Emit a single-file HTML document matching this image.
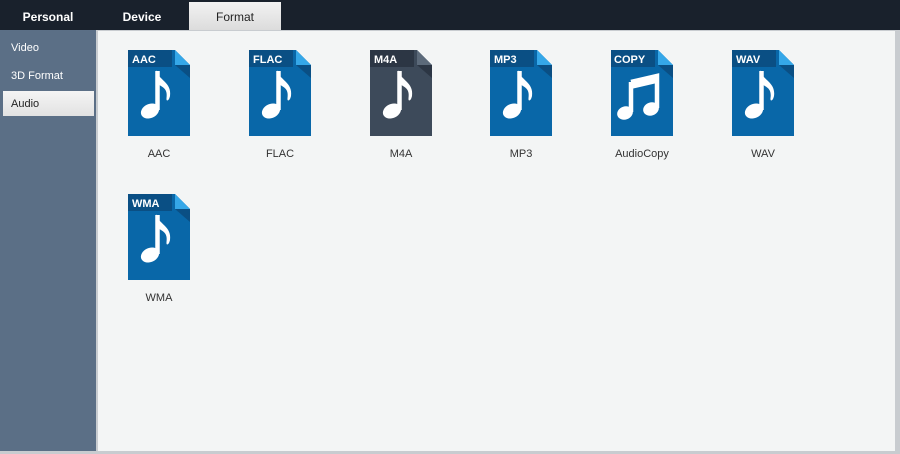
<!DOCTYPE html>
<html><head><meta charset="utf-8"><style>
body{margin:0;width:900px;height:454px;overflow:hidden;font-family:"Liberation Sans",Arial,sans-serif;background:#c8ccd0;position:relative}
#hdr{position:absolute;left:0;top:0;width:900px;height:30px;background:#19212c}
.tab{position:absolute;top:0;height:30px;line-height:35px;font-size:12px;font-weight:bold;color:#fff;text-align:center}
#fmt{left:189px;top:2px;width:92px;height:28px;line-height:31px;background:linear-gradient(#f2f2f2,#dcdcdc);color:#222;font-weight:normal}
#side{position:absolute;left:0;top:30px;width:96px;height:421px;background:#5b6f86}
.si{position:absolute;left:11px;font-size:11px;color:#fff}
#aud{position:absolute;left:3px;top:91px;width:91px;height:25px;background:linear-gradient(#f4f4f4,#e2e2e2)}
#main{position:absolute;left:98px;top:31px;width:797px;height:420px;background:#f3f5f5}
.ic{position:absolute;width:62px;height:86px}
.lb{position:absolute;width:100px;text-align:center;font-size:11px;color:#333}
</style></head><body>
<div id="hdr"></div>
<div class="tab" style="left:0;width:96px">Personal</div>
<div class="tab" style="left:96px;width:92px">Device</div>
<div class="tab" id="fmt">Format</div>
<div id="side"></div>
<div id="aud"></div>
<div class="si" style="top:42px">Video</div>
<div class="si" style="top:70px">3D Format</div>
<div class="si" style="top:98px;color:#222">Audio</div>
<div id="main"></div>
<svg width="0" height="0" style="position:absolute">
<defs>
<g id="note"><path d="M29.5 21 V60" stroke="#fff" stroke-width="4.5"/><ellipse cx="22" cy="61" rx="9.5" ry="7" fill="#fff" transform="rotate(-25 22 61)"/><path d="M28 20 C30 30 44 32 42 46 C41 51 38 52 38.5 48 C40 38 34 37 28 33 Z" fill="#fff"/></g>
<g id="note2"><path d="M20 32 L46 26 V58 M20 32 V62" stroke="#fff" stroke-width="4.5" fill="none"/><path d="M20 30 L46 24 V33 L20 39Z" fill="#fff"/><ellipse cx="14" cy="63" rx="8" ry="6.5" fill="#fff" transform="rotate(-20 14 63)"/><ellipse cx="40" cy="59" rx="8" ry="6.5" fill="#fff" transform="rotate(-20 40 59)"/></g>
</defs></svg>
<svg class="ic" style="left:128px;top:50px"><path d="M0 0H47L62 15V86H0Z" fill="#0967a8"/><rect width="44" height="17" fill="#0a4f84"/><path d="M47 0L62 15H47Z" fill="#35a7e8"/><path d="M47 15H62V28Z" fill="#0a4f84"/><text x="4" y="13" font-size="11" font-weight="bold" fill="#fff" font-family="Liberation Sans">AAC</text><use href="#note"/></svg>
<svg class="ic" style="left:249px;top:50px"><path d="M0 0H47L62 15V86H0Z" fill="#0967a8"/><rect width="44" height="17" fill="#0a4f84"/><path d="M47 0L62 15H47Z" fill="#35a7e8"/><path d="M47 15H62V28Z" fill="#0a4f84"/><text x="4" y="13" font-size="11" font-weight="bold" fill="#fff" font-family="Liberation Sans">FLAC</text><use href="#note"/></svg>
<svg class="ic" style="left:370px;top:50px"><path d="M0 0H47L62 15V86H0Z" fill="#3d4a5a"/><rect width="44" height="17" fill="#2c3644"/><path d="M47 0L62 15H47Z" fill="#5c6a7a"/><path d="M47 15H62V28Z" fill="#2c3644"/><text x="4" y="13" font-size="11" font-weight="bold" fill="#fff" font-family="Liberation Sans">M4A</text><use href="#note"/></svg>
<svg class="ic" style="left:490px;top:50px"><path d="M0 0H47L62 15V86H0Z" fill="#0967a8"/><rect width="44" height="17" fill="#0a4f84"/><path d="M47 0L62 15H47Z" fill="#35a7e8"/><path d="M47 15H62V28Z" fill="#0a4f84"/><text x="4" y="13" font-size="11" font-weight="bold" fill="#fff" font-family="Liberation Sans">MP3</text><use href="#note"/></svg>
<svg class="ic" style="left:611px;top:50px"><path d="M0 0H47L62 15V86H0Z" fill="#0967a8"/><rect width="44" height="17" fill="#0a4f84"/><path d="M47 0L62 15H47Z" fill="#35a7e8"/><path d="M47 15H62V28Z" fill="#0a4f84"/><text x="3" y="13" font-size="11" font-weight="bold" fill="#fff" font-family="Liberation Sans">COPY</text><use href="#note2"/></svg>
<svg class="ic" style="left:732px;top:50px"><path d="M0 0H47L62 15V86H0Z" fill="#0967a8"/><rect width="44" height="17" fill="#0a4f84"/><path d="M47 0L62 15H47Z" fill="#35a7e8"/><path d="M47 15H62V28Z" fill="#0a4f84"/><text x="4" y="13" font-size="11" font-weight="bold" fill="#fff" font-family="Liberation Sans">WAV</text><use href="#note"/></svg>
<svg class="ic" style="left:128px;top:194px"><path d="M0 0H47L62 15V86H0Z" fill="#0967a8"/><rect width="44" height="17" fill="#0a4f84"/><path d="M47 0L62 15H47Z" fill="#35a7e8"/><path d="M47 15H62V28Z" fill="#0a4f84"/><text x="4" y="13" font-size="11" font-weight="bold" fill="#fff" font-family="Liberation Sans">WMA</text><use href="#note"/></svg>
<div class="lb" style="left:109px;top:148px">AAC</div>
<div class="lb" style="left:230px;top:148px">FLAC</div>
<div class="lb" style="left:351px;top:148px">M4A</div>
<div class="lb" style="left:471px;top:148px">MP3</div>
<div class="lb" style="left:592px;top:148px">AudioCopy</div>
<div class="lb" style="left:713px;top:148px">WAV</div>
<div class="lb" style="left:109px;top:292px">WMA</div>
</body></html>
